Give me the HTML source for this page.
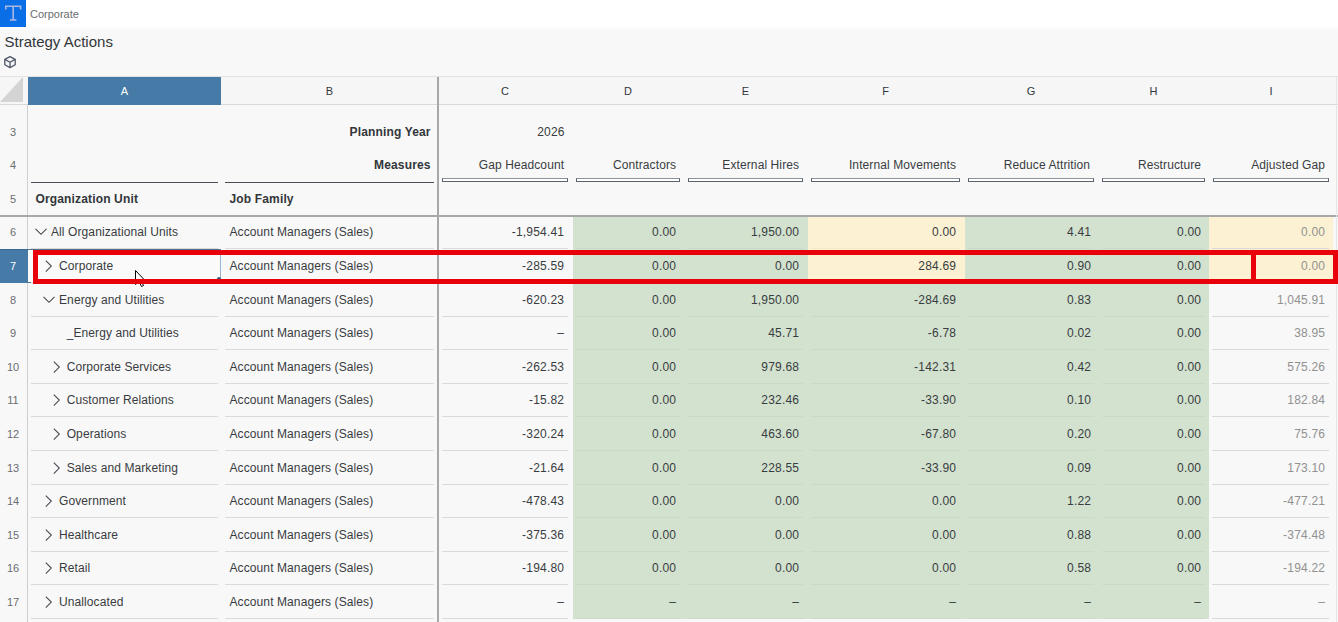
<!DOCTYPE html>
<html><head><meta charset="utf-8"><style>
html,body{margin:0;padding:0;width:1338px;height:622px;overflow:hidden;background:#f8f8f8;font-family:'Liberation Sans',sans-serif;}
.t{position:absolute;white-space:pre;}
.r{position:absolute;box-sizing:content-box;}
svg.r{display:block}
</style></head><body>
<div class="r" style="left:0px;top:0px;width:1338px;height:27px;background:#ffffff;"></div>
<div class="r" style="left:0px;top:0px;width:26px;height:27px;background:#0a6ee6;"></div>
<div class="r" style="left:0;top:27px;width:1338px;height:4px;background:linear-gradient(#fdfdfd,#f8f8f8)"></div>
<svg class="r" style="left:0;top:0" width="26" height="27"><g fill="none" stroke="#aab8e2" stroke-width="1.6"><path d="M5.8 9.5 V6.3 H20.6 V9.5"/><path d="M13.2 6.3 V20"/><path d="M10 20 H16.4"/></g></svg>
<div class="t" style="top:8.00px;font-size:11px;line-height:12px;color:#6a6d70;left:30.00px;">Corporate</div>
<div class="t" style="top:32.50px;font-size:15px;line-height:17px;color:#32363a;left:4.50px;">Strategy Actions</div>
<svg class="r" style="left:3px;top:55px" width="14" height="14" viewBox="0 0 14 14"><g fill="none" stroke="#4d5766" stroke-width="1.3" stroke-linejoin="round"><path d="M7 1.6 L12.2 4.4 V9.8 L7 12.6 L1.8 9.8 V4.4 Z"/><path d="M1.8 4.4 L7 7.2 L12.2 4.4 M7 7.2 V12.6"/></g></svg>
<div class="r" style="left:0px;top:76px;width:1338px;height:29px;background:#f6f6f6;"></div>
<div class="r" style="left:0px;top:76px;width:1338px;height:1px;background:#e3e3e3;"></div>
<div class="r" style="left:0px;top:104px;width:1338px;height:1px;background:#d9d9d9;"></div>
<svg class="r" style="left:0;top:77px" width="24" height="26"><path d="M23 0 V25 H0 Z" fill="#d4d4d4"/></svg>
<div class="r" style="left:28px;top:77px;width:193px;height:28px;background:#467ba8;"></div>
<div class="t" style="top:85.00px;font-size:11px;line-height:12px;color:#ffffff;left:24.50px;width:200px;text-align:center;">A</div>
<div class="t" style="top:85.00px;font-size:11px;line-height:12px;color:#32363a;left:229.50px;width:200px;text-align:center;">B</div>
<div class="t" style="top:85.00px;font-size:11px;line-height:12px;color:#32363a;left:405.00px;width:200px;text-align:center;">C</div>
<div class="t" style="top:85.00px;font-size:11px;line-height:12px;color:#32363a;left:528.00px;width:200px;text-align:center;">D</div>
<div class="t" style="top:85.00px;font-size:11px;line-height:12px;color:#32363a;left:645.50px;width:200px;text-align:center;">E</div>
<div class="t" style="top:85.00px;font-size:11px;line-height:12px;color:#32363a;left:785.50px;width:200px;text-align:center;">F</div>
<div class="t" style="top:85.00px;font-size:11px;line-height:12px;color:#32363a;left:931.00px;width:200px;text-align:center;">G</div>
<div class="t" style="top:85.00px;font-size:11px;line-height:12px;color:#32363a;left:1053.50px;width:200px;text-align:center;">H</div>
<div class="t" style="top:85.00px;font-size:11px;line-height:12px;color:#32363a;left:1171.00px;width:200px;text-align:center;">I</div>
<div class="r" style="left:27px;top:105px;width:1px;height:517px;background:#cfcfcf;"></div>
<div class="r" style="left:0px;top:215px;width:1338px;height:2px;background:#a8a8a8;"></div>
<div class="r" style="left:437px;top:77px;width:2px;height:545px;background:#a8a8a8;"></div>
<div class="r" style="left:0px;top:249px;width:28px;height:34px;background:#467ba8;"></div>
<div class="r" style="left:0px;top:249px;width:28px;height:1px;background:#3b6890;"></div>
<div class="t" style="top:125.50px;font-size:11px;line-height:12px;color:#6a6d70;left:-87.00px;width:200px;text-align:center;">3</div>
<div class="t" style="top:158.50px;font-size:11px;line-height:12px;color:#6a6d70;left:-87.00px;width:200px;text-align:center;">4</div>
<div class="t" style="top:192.50px;font-size:11px;line-height:12px;color:#6a6d70;left:-87.00px;width:200px;text-align:center;">5</div>
<div class="t" style="top:226.00px;font-size:11px;line-height:12px;color:#6a6d70;left:-87.00px;width:200px;text-align:center;">6</div>
<div class="t" style="top:260.00px;font-size:11px;line-height:12px;color:#ffffff;left:-87.00px;width:200px;text-align:center;">7</div>
<div class="t" style="top:294.00px;font-size:11px;line-height:12px;color:#6a6d70;left:-87.00px;width:200px;text-align:center;">8</div>
<div class="t" style="top:327.00px;font-size:11px;line-height:12px;color:#6a6d70;left:-87.00px;width:200px;text-align:center;">9</div>
<div class="t" style="top:361.00px;font-size:11px;line-height:12px;color:#6a6d70;left:-87.00px;width:200px;text-align:center;">10</div>
<div class="t" style="top:394.00px;font-size:11px;line-height:12px;color:#6a6d70;left:-87.00px;width:200px;text-align:center;">11</div>
<div class="t" style="top:428.00px;font-size:11px;line-height:12px;color:#6a6d70;left:-87.00px;width:200px;text-align:center;">12</div>
<div class="t" style="top:462.00px;font-size:11px;line-height:12px;color:#6a6d70;left:-87.00px;width:200px;text-align:center;">13</div>
<div class="t" style="top:495.00px;font-size:11px;line-height:12px;color:#6a6d70;left:-87.00px;width:200px;text-align:center;">14</div>
<div class="t" style="top:529.00px;font-size:11px;line-height:12px;color:#6a6d70;left:-87.00px;width:200px;text-align:center;">15</div>
<div class="t" style="top:562.00px;font-size:11px;line-height:12px;color:#6a6d70;left:-87.00px;width:200px;text-align:center;">16</div>
<div class="t" style="top:596.00px;font-size:11px;line-height:12px;color:#6a6d70;left:-87.00px;width:200px;text-align:center;">17</div>
<div class="t" style="top:124.70px;font-size:12px;line-height:14px;color:#32363a;font-weight:bold;letter-spacing:0.15px;right:907.35px;">Planning Year</div>
<div class="t" style="top:124.70px;font-size:12px;line-height:14px;color:#383c41;letter-spacing:0.2px;right:773.30px;">2026</div>
<div class="t" style="top:157.50px;font-size:12px;line-height:14px;color:#32363a;font-weight:bold;letter-spacing:0.15px;right:907.35px;">Measures</div>
<div class="t" style="top:157.50px;font-size:12px;line-height:14px;color:#383c41;letter-spacing:0.1px;right:773.90px;">Gap Headcount</div>
<div class="r" style="left:442px;top:178px;width:124px;height:2px;border:1px solid #5b6370;border-top-color:#8d939b;background:#fff"></div>
<div class="t" style="top:157.50px;font-size:12px;line-height:14px;color:#383c41;letter-spacing:0.1px;right:661.90px;">Contractors</div>
<div class="r" style="left:576px;top:178px;width:102px;height:2px;border:1px solid #5b6370;border-top-color:#8d939b;background:#fff"></div>
<div class="t" style="top:157.50px;font-size:12px;line-height:14px;color:#383c41;letter-spacing:0.1px;right:538.90px;">External Hires</div>
<div class="r" style="left:688px;top:178px;width:113px;height:2px;border:1px solid #5b6370;border-top-color:#8d939b;background:#fff"></div>
<div class="t" style="top:157.50px;font-size:12px;line-height:14px;color:#383c41;letter-spacing:0.1px;right:381.90px;">Internal Movements</div>
<div class="r" style="left:811px;top:178px;width:147px;height:2px;border:1px solid #5b6370;border-top-color:#8d939b;background:#fff"></div>
<div class="t" style="top:157.50px;font-size:12px;line-height:14px;color:#383c41;letter-spacing:0.1px;right:247.90px;">Reduce Attrition</div>
<div class="r" style="left:968px;top:178px;width:124px;height:2px;border:1px solid #5b6370;border-top-color:#8d939b;background:#fff"></div>
<div class="t" style="top:157.50px;font-size:12px;line-height:14px;color:#383c41;letter-spacing:0.1px;right:136.90px;">Restructure</div>
<div class="r" style="left:1102px;top:178px;width:101px;height:2px;border:1px solid #5b6370;border-top-color:#8d939b;background:#fff"></div>
<div class="t" style="top:157.50px;font-size:12px;line-height:14px;color:#383c41;letter-spacing:0.1px;right:12.90px;">Adjusted Gap</div>
<div class="r" style="left:1213px;top:178px;width:114px;height:2px;border:1px solid #5b6370;border-top-color:#8d939b;background:#fff"></div>
<div class="r" style="left:31px;top:182px;width:187px;height:1px;background:#4a4f55;"></div>
<div class="r" style="left:225px;top:182px;width:209px;height:1px;background:#4a4f55;"></div>
<div class="t" style="top:192.00px;font-size:12px;line-height:14px;color:#32363a;font-weight:bold;letter-spacing:0.15px;left:35.50px;">Organization Unit</div>
<div class="t" style="top:192.00px;font-size:12px;line-height:14px;color:#32363a;font-weight:bold;letter-spacing:0.15px;left:229.50px;">Job Family</div>
<div class="r" style="left:573px;top:217px;width:636px;height:402px;background:#d3e2cf"></div>
<div class="r" style="left:808px;top:217.0px;width:157px;height:33.6px;background:#fcf2d3"></div>
<div class="r" style="left:1209px;top:217.0px;width:124px;height:33.6px;background:#fcf2d3"></div>
<div class="r" style="left:808px;top:250.6px;width:157px;height:33.6px;background:#fcf2d3"></div>
<div class="r" style="left:1209px;top:250.6px;width:124px;height:33.6px;background:#fcf2d3"></div>
<div class="r" style="left:28px;top:249px;width:192px;height:32px;background:#fafafa;border-top:1px solid #4f6f8f;border-bottom:1px solid #4f6f8f;border-right:1px solid #9ab5d2"></div>
<div class="r" style="left:31px;top:248px;width:187px;height:1px;background:#dadada;"></div>
<div class="r" style="left:225px;top:248px;width:209px;height:1px;background:#dadada;"></div>
<div class="r" style="left:442px;top:248px;width:126px;height:1px;background:#dadada;"></div>
<div class="r" style="left:576px;top:248px;width:104px;height:1px;background:rgba(0,0,0,0.035)"></div>
<div class="r" style="left:688px;top:248px;width:115px;height:1px;background:rgba(0,0,0,0.035)"></div>
<div class="r" style="left:811px;top:248px;width:149px;height:1px;background:rgba(0,0,0,0.035)"></div>
<div class="r" style="left:968px;top:248px;width:126px;height:1px;background:rgba(0,0,0,0.035)"></div>
<div class="r" style="left:1102px;top:248px;width:103px;height:1px;background:rgba(0,0,0,0.035)"></div>
<div class="r" style="left:1212px;top:248px;width:117px;height:1px;background:#dadada;"></div>
<svg class="r" style="left:35px;top:228.40px" width="12" height="8"><path d="M0.5 0.8 L6 6.3 L11.5 0.8" fill="none" stroke="#42474d" stroke-width="1.05"/></svg>
<div class="t" style="top:225.00px;font-size:12px;line-height:14px;color:#383c41;letter-spacing:0.1px;left:51.00px;">All Organizational Units</div>
<div class="t" style="top:225.00px;font-size:12px;line-height:14px;color:#383c41;letter-spacing:0.1px;left:229.50px;">Account Managers (Sales)</div>
<div class="t" style="top:225.00px;font-size:12px;line-height:14px;color:#383c41;letter-spacing:0.2px;right:773.80px;">-1,954.41</div>
<div class="t" style="top:225.00px;font-size:12px;line-height:14px;color:#383c41;letter-spacing:0.2px;right:661.80px;">0.00</div>
<div class="t" style="top:225.00px;font-size:12px;line-height:14px;color:#383c41;letter-spacing:0.2px;right:538.80px;">1,950.00</div>
<div class="t" style="top:225.00px;font-size:12px;line-height:14px;color:#383c41;letter-spacing:0.2px;right:381.80px;">0.00</div>
<div class="t" style="top:225.00px;font-size:12px;line-height:14px;color:#383c41;letter-spacing:0.2px;right:246.80px;">4.41</div>
<div class="t" style="top:225.00px;font-size:12px;line-height:14px;color:#383c41;letter-spacing:0.2px;right:136.80px;">0.00</div>
<div class="t" style="top:225.00px;font-size:12px;line-height:14px;color:#919191;letter-spacing:0.2px;right:12.80px;">0.00</div>
<div class="r" style="left:31px;top:282px;width:187px;height:1px;background:#dadada;"></div>
<div class="r" style="left:225px;top:282px;width:209px;height:1px;background:#dadada;"></div>
<div class="r" style="left:442px;top:282px;width:126px;height:1px;background:#dadada;"></div>
<div class="r" style="left:576px;top:282px;width:104px;height:1px;background:rgba(0,0,0,0.035)"></div>
<div class="r" style="left:688px;top:282px;width:115px;height:1px;background:rgba(0,0,0,0.035)"></div>
<div class="r" style="left:811px;top:282px;width:149px;height:1px;background:rgba(0,0,0,0.035)"></div>
<div class="r" style="left:968px;top:282px;width:126px;height:1px;background:rgba(0,0,0,0.035)"></div>
<div class="r" style="left:1102px;top:282px;width:103px;height:1px;background:rgba(0,0,0,0.035)"></div>
<div class="r" style="left:1212px;top:282px;width:117px;height:1px;background:#dadada;"></div>
<svg class="r" style="left:45.2px;top:259.80px" width="8" height="13"><path d="M0.8 0.6 L6.3 6.1 L0.8 11.6" fill="none" stroke="#42474d" stroke-width="1.05"/></svg>
<div class="t" style="top:259.00px;font-size:12px;line-height:14px;color:#383c41;letter-spacing:0.1px;left:59.00px;">Corporate</div>
<div class="t" style="top:259.00px;font-size:12px;line-height:14px;color:#383c41;letter-spacing:0.1px;left:229.50px;">Account Managers (Sales)</div>
<div class="t" style="top:259.00px;font-size:12px;line-height:14px;color:#383c41;letter-spacing:0.2px;right:773.80px;">-285.59</div>
<div class="t" style="top:259.00px;font-size:12px;line-height:14px;color:#383c41;letter-spacing:0.2px;right:661.80px;">0.00</div>
<div class="t" style="top:259.00px;font-size:12px;line-height:14px;color:#383c41;letter-spacing:0.2px;right:538.80px;">0.00</div>
<div class="t" style="top:259.00px;font-size:12px;line-height:14px;color:#383c41;letter-spacing:0.2px;right:381.80px;">284.69</div>
<div class="t" style="top:259.00px;font-size:12px;line-height:14px;color:#383c41;letter-spacing:0.2px;right:246.80px;">0.90</div>
<div class="t" style="top:259.00px;font-size:12px;line-height:14px;color:#383c41;letter-spacing:0.2px;right:136.80px;">0.00</div>
<div class="t" style="top:259.00px;font-size:12px;line-height:14px;color:#919191;letter-spacing:0.2px;right:12.80px;">0.00</div>
<div class="r" style="left:31px;top:316px;width:187px;height:1px;background:#dadada;"></div>
<div class="r" style="left:225px;top:316px;width:209px;height:1px;background:#dadada;"></div>
<div class="r" style="left:442px;top:316px;width:126px;height:1px;background:#dadada;"></div>
<div class="r" style="left:576px;top:316px;width:104px;height:1px;background:rgba(0,0,0,0.035)"></div>
<div class="r" style="left:688px;top:316px;width:115px;height:1px;background:rgba(0,0,0,0.035)"></div>
<div class="r" style="left:811px;top:316px;width:149px;height:1px;background:rgba(0,0,0,0.035)"></div>
<div class="r" style="left:968px;top:316px;width:126px;height:1px;background:rgba(0,0,0,0.035)"></div>
<div class="r" style="left:1102px;top:316px;width:103px;height:1px;background:rgba(0,0,0,0.035)"></div>
<div class="r" style="left:1212px;top:316px;width:117px;height:1px;background:#dadada;"></div>
<svg class="r" style="left:43px;top:296.40px" width="12" height="8"><path d="M0.5 0.8 L6 6.3 L11.5 0.8" fill="none" stroke="#42474d" stroke-width="1.05"/></svg>
<div class="t" style="top:293.00px;font-size:12px;line-height:14px;color:#383c41;letter-spacing:0.1px;left:59.00px;">Energy and Utilities</div>
<div class="t" style="top:293.00px;font-size:12px;line-height:14px;color:#383c41;letter-spacing:0.1px;left:229.50px;">Account Managers (Sales)</div>
<div class="t" style="top:293.00px;font-size:12px;line-height:14px;color:#383c41;letter-spacing:0.2px;right:773.80px;">-620.23</div>
<div class="t" style="top:293.00px;font-size:12px;line-height:14px;color:#383c41;letter-spacing:0.2px;right:661.80px;">0.00</div>
<div class="t" style="top:293.00px;font-size:12px;line-height:14px;color:#383c41;letter-spacing:0.2px;right:538.80px;">1,950.00</div>
<div class="t" style="top:293.00px;font-size:12px;line-height:14px;color:#383c41;letter-spacing:0.2px;right:381.80px;">-284.69</div>
<div class="t" style="top:293.00px;font-size:12px;line-height:14px;color:#383c41;letter-spacing:0.2px;right:246.80px;">0.83</div>
<div class="t" style="top:293.00px;font-size:12px;line-height:14px;color:#383c41;letter-spacing:0.2px;right:136.80px;">0.00</div>
<div class="t" style="top:293.00px;font-size:12px;line-height:14px;color:#919191;letter-spacing:0.2px;right:12.80px;">1,045.91</div>
<div class="r" style="left:31px;top:349px;width:187px;height:1px;background:#dadada;"></div>
<div class="r" style="left:225px;top:349px;width:209px;height:1px;background:#dadada;"></div>
<div class="r" style="left:442px;top:349px;width:126px;height:1px;background:#dadada;"></div>
<div class="r" style="left:576px;top:349px;width:104px;height:1px;background:rgba(0,0,0,0.035)"></div>
<div class="r" style="left:688px;top:349px;width:115px;height:1px;background:rgba(0,0,0,0.035)"></div>
<div class="r" style="left:811px;top:349px;width:149px;height:1px;background:rgba(0,0,0,0.035)"></div>
<div class="r" style="left:968px;top:349px;width:126px;height:1px;background:rgba(0,0,0,0.035)"></div>
<div class="r" style="left:1102px;top:349px;width:103px;height:1px;background:rgba(0,0,0,0.035)"></div>
<div class="r" style="left:1212px;top:349px;width:117px;height:1px;background:#dadada;"></div>
<div class="t" style="top:326.00px;font-size:12px;line-height:14px;color:#383c41;letter-spacing:0.1px;left:66.70px;">_Energy and Utilities</div>
<div class="t" style="top:326.00px;font-size:12px;line-height:14px;color:#383c41;letter-spacing:0.1px;left:229.50px;">Account Managers (Sales)</div>
<div class="t" style="top:326.00px;font-size:12px;line-height:14px;color:#383c41;letter-spacing:0.2px;right:773.80px;">&ndash;</div>
<div class="t" style="top:326.00px;font-size:12px;line-height:14px;color:#383c41;letter-spacing:0.2px;right:661.80px;">0.00</div>
<div class="t" style="top:326.00px;font-size:12px;line-height:14px;color:#383c41;letter-spacing:0.2px;right:538.80px;">45.71</div>
<div class="t" style="top:326.00px;font-size:12px;line-height:14px;color:#383c41;letter-spacing:0.2px;right:381.80px;">-6.78</div>
<div class="t" style="top:326.00px;font-size:12px;line-height:14px;color:#383c41;letter-spacing:0.2px;right:246.80px;">0.02</div>
<div class="t" style="top:326.00px;font-size:12px;line-height:14px;color:#383c41;letter-spacing:0.2px;right:136.80px;">0.00</div>
<div class="t" style="top:326.00px;font-size:12px;line-height:14px;color:#919191;letter-spacing:0.2px;right:12.80px;">38.95</div>
<div class="r" style="left:31px;top:383px;width:187px;height:1px;background:#dadada;"></div>
<div class="r" style="left:225px;top:383px;width:209px;height:1px;background:#dadada;"></div>
<div class="r" style="left:442px;top:383px;width:126px;height:1px;background:#dadada;"></div>
<div class="r" style="left:576px;top:383px;width:104px;height:1px;background:rgba(0,0,0,0.035)"></div>
<div class="r" style="left:688px;top:383px;width:115px;height:1px;background:rgba(0,0,0,0.035)"></div>
<div class="r" style="left:811px;top:383px;width:149px;height:1px;background:rgba(0,0,0,0.035)"></div>
<div class="r" style="left:968px;top:383px;width:126px;height:1px;background:rgba(0,0,0,0.035)"></div>
<div class="r" style="left:1102px;top:383px;width:103px;height:1px;background:rgba(0,0,0,0.035)"></div>
<div class="r" style="left:1212px;top:383px;width:117px;height:1px;background:#dadada;"></div>
<svg class="r" style="left:52.7px;top:360.80px" width="8" height="13"><path d="M0.8 0.6 L6.3 6.1 L0.8 11.6" fill="none" stroke="#42474d" stroke-width="1.05"/></svg>
<div class="t" style="top:360.00px;font-size:12px;line-height:14px;color:#383c41;letter-spacing:0.1px;left:66.70px;">Corporate Services</div>
<div class="t" style="top:360.00px;font-size:12px;line-height:14px;color:#383c41;letter-spacing:0.1px;left:229.50px;">Account Managers (Sales)</div>
<div class="t" style="top:360.00px;font-size:12px;line-height:14px;color:#383c41;letter-spacing:0.2px;right:773.80px;">-262.53</div>
<div class="t" style="top:360.00px;font-size:12px;line-height:14px;color:#383c41;letter-spacing:0.2px;right:661.80px;">0.00</div>
<div class="t" style="top:360.00px;font-size:12px;line-height:14px;color:#383c41;letter-spacing:0.2px;right:538.80px;">979.68</div>
<div class="t" style="top:360.00px;font-size:12px;line-height:14px;color:#383c41;letter-spacing:0.2px;right:381.80px;">-142.31</div>
<div class="t" style="top:360.00px;font-size:12px;line-height:14px;color:#383c41;letter-spacing:0.2px;right:246.80px;">0.42</div>
<div class="t" style="top:360.00px;font-size:12px;line-height:14px;color:#383c41;letter-spacing:0.2px;right:136.80px;">0.00</div>
<div class="t" style="top:360.00px;font-size:12px;line-height:14px;color:#919191;letter-spacing:0.2px;right:12.80px;">575.26</div>
<div class="r" style="left:31px;top:416px;width:187px;height:1px;background:#dadada;"></div>
<div class="r" style="left:225px;top:416px;width:209px;height:1px;background:#dadada;"></div>
<div class="r" style="left:442px;top:416px;width:126px;height:1px;background:#dadada;"></div>
<div class="r" style="left:576px;top:416px;width:104px;height:1px;background:rgba(0,0,0,0.035)"></div>
<div class="r" style="left:688px;top:416px;width:115px;height:1px;background:rgba(0,0,0,0.035)"></div>
<div class="r" style="left:811px;top:416px;width:149px;height:1px;background:rgba(0,0,0,0.035)"></div>
<div class="r" style="left:968px;top:416px;width:126px;height:1px;background:rgba(0,0,0,0.035)"></div>
<div class="r" style="left:1102px;top:416px;width:103px;height:1px;background:rgba(0,0,0,0.035)"></div>
<div class="r" style="left:1212px;top:416px;width:117px;height:1px;background:#dadada;"></div>
<svg class="r" style="left:52.7px;top:393.80px" width="8" height="13"><path d="M0.8 0.6 L6.3 6.1 L0.8 11.6" fill="none" stroke="#42474d" stroke-width="1.05"/></svg>
<div class="t" style="top:393.00px;font-size:12px;line-height:14px;color:#383c41;letter-spacing:0.1px;left:66.70px;">Customer Relations</div>
<div class="t" style="top:393.00px;font-size:12px;line-height:14px;color:#383c41;letter-spacing:0.1px;left:229.50px;">Account Managers (Sales)</div>
<div class="t" style="top:393.00px;font-size:12px;line-height:14px;color:#383c41;letter-spacing:0.2px;right:773.80px;">-15.82</div>
<div class="t" style="top:393.00px;font-size:12px;line-height:14px;color:#383c41;letter-spacing:0.2px;right:661.80px;">0.00</div>
<div class="t" style="top:393.00px;font-size:12px;line-height:14px;color:#383c41;letter-spacing:0.2px;right:538.80px;">232.46</div>
<div class="t" style="top:393.00px;font-size:12px;line-height:14px;color:#383c41;letter-spacing:0.2px;right:381.80px;">-33.90</div>
<div class="t" style="top:393.00px;font-size:12px;line-height:14px;color:#383c41;letter-spacing:0.2px;right:246.80px;">0.10</div>
<div class="t" style="top:393.00px;font-size:12px;line-height:14px;color:#383c41;letter-spacing:0.2px;right:136.80px;">0.00</div>
<div class="t" style="top:393.00px;font-size:12px;line-height:14px;color:#919191;letter-spacing:0.2px;right:12.80px;">182.84</div>
<div class="r" style="left:31px;top:450px;width:187px;height:1px;background:#dadada;"></div>
<div class="r" style="left:225px;top:450px;width:209px;height:1px;background:#dadada;"></div>
<div class="r" style="left:442px;top:450px;width:126px;height:1px;background:#dadada;"></div>
<div class="r" style="left:576px;top:450px;width:104px;height:1px;background:rgba(0,0,0,0.035)"></div>
<div class="r" style="left:688px;top:450px;width:115px;height:1px;background:rgba(0,0,0,0.035)"></div>
<div class="r" style="left:811px;top:450px;width:149px;height:1px;background:rgba(0,0,0,0.035)"></div>
<div class="r" style="left:968px;top:450px;width:126px;height:1px;background:rgba(0,0,0,0.035)"></div>
<div class="r" style="left:1102px;top:450px;width:103px;height:1px;background:rgba(0,0,0,0.035)"></div>
<div class="r" style="left:1212px;top:450px;width:117px;height:1px;background:#dadada;"></div>
<svg class="r" style="left:52.7px;top:427.80px" width="8" height="13"><path d="M0.8 0.6 L6.3 6.1 L0.8 11.6" fill="none" stroke="#42474d" stroke-width="1.05"/></svg>
<div class="t" style="top:427.00px;font-size:12px;line-height:14px;color:#383c41;letter-spacing:0.1px;left:66.70px;">Operations</div>
<div class="t" style="top:427.00px;font-size:12px;line-height:14px;color:#383c41;letter-spacing:0.1px;left:229.50px;">Account Managers (Sales)</div>
<div class="t" style="top:427.00px;font-size:12px;line-height:14px;color:#383c41;letter-spacing:0.2px;right:773.80px;">-320.24</div>
<div class="t" style="top:427.00px;font-size:12px;line-height:14px;color:#383c41;letter-spacing:0.2px;right:661.80px;">0.00</div>
<div class="t" style="top:427.00px;font-size:12px;line-height:14px;color:#383c41;letter-spacing:0.2px;right:538.80px;">463.60</div>
<div class="t" style="top:427.00px;font-size:12px;line-height:14px;color:#383c41;letter-spacing:0.2px;right:381.80px;">-67.80</div>
<div class="t" style="top:427.00px;font-size:12px;line-height:14px;color:#383c41;letter-spacing:0.2px;right:246.80px;">0.20</div>
<div class="t" style="top:427.00px;font-size:12px;line-height:14px;color:#383c41;letter-spacing:0.2px;right:136.80px;">0.00</div>
<div class="t" style="top:427.00px;font-size:12px;line-height:14px;color:#919191;letter-spacing:0.2px;right:12.80px;">75.76</div>
<div class="r" style="left:31px;top:484px;width:187px;height:1px;background:#dadada;"></div>
<div class="r" style="left:225px;top:484px;width:209px;height:1px;background:#dadada;"></div>
<div class="r" style="left:442px;top:484px;width:126px;height:1px;background:#dadada;"></div>
<div class="r" style="left:576px;top:484px;width:104px;height:1px;background:rgba(0,0,0,0.035)"></div>
<div class="r" style="left:688px;top:484px;width:115px;height:1px;background:rgba(0,0,0,0.035)"></div>
<div class="r" style="left:811px;top:484px;width:149px;height:1px;background:rgba(0,0,0,0.035)"></div>
<div class="r" style="left:968px;top:484px;width:126px;height:1px;background:rgba(0,0,0,0.035)"></div>
<div class="r" style="left:1102px;top:484px;width:103px;height:1px;background:rgba(0,0,0,0.035)"></div>
<div class="r" style="left:1212px;top:484px;width:117px;height:1px;background:#dadada;"></div>
<svg class="r" style="left:52.7px;top:461.80px" width="8" height="13"><path d="M0.8 0.6 L6.3 6.1 L0.8 11.6" fill="none" stroke="#42474d" stroke-width="1.05"/></svg>
<div class="t" style="top:461.00px;font-size:12px;line-height:14px;color:#383c41;letter-spacing:0.1px;left:66.70px;">Sales and Marketing</div>
<div class="t" style="top:461.00px;font-size:12px;line-height:14px;color:#383c41;letter-spacing:0.1px;left:229.50px;">Account Managers (Sales)</div>
<div class="t" style="top:461.00px;font-size:12px;line-height:14px;color:#383c41;letter-spacing:0.2px;right:773.80px;">-21.64</div>
<div class="t" style="top:461.00px;font-size:12px;line-height:14px;color:#383c41;letter-spacing:0.2px;right:661.80px;">0.00</div>
<div class="t" style="top:461.00px;font-size:12px;line-height:14px;color:#383c41;letter-spacing:0.2px;right:538.80px;">228.55</div>
<div class="t" style="top:461.00px;font-size:12px;line-height:14px;color:#383c41;letter-spacing:0.2px;right:381.80px;">-33.90</div>
<div class="t" style="top:461.00px;font-size:12px;line-height:14px;color:#383c41;letter-spacing:0.2px;right:246.80px;">0.09</div>
<div class="t" style="top:461.00px;font-size:12px;line-height:14px;color:#383c41;letter-spacing:0.2px;right:136.80px;">0.00</div>
<div class="t" style="top:461.00px;font-size:12px;line-height:14px;color:#919191;letter-spacing:0.2px;right:12.80px;">173.10</div>
<div class="r" style="left:31px;top:517px;width:187px;height:1px;background:#dadada;"></div>
<div class="r" style="left:225px;top:517px;width:209px;height:1px;background:#dadada;"></div>
<div class="r" style="left:442px;top:517px;width:126px;height:1px;background:#dadada;"></div>
<div class="r" style="left:576px;top:517px;width:104px;height:1px;background:rgba(0,0,0,0.035)"></div>
<div class="r" style="left:688px;top:517px;width:115px;height:1px;background:rgba(0,0,0,0.035)"></div>
<div class="r" style="left:811px;top:517px;width:149px;height:1px;background:rgba(0,0,0,0.035)"></div>
<div class="r" style="left:968px;top:517px;width:126px;height:1px;background:rgba(0,0,0,0.035)"></div>
<div class="r" style="left:1102px;top:517px;width:103px;height:1px;background:rgba(0,0,0,0.035)"></div>
<div class="r" style="left:1212px;top:517px;width:117px;height:1px;background:#dadada;"></div>
<svg class="r" style="left:45.2px;top:494.80px" width="8" height="13"><path d="M0.8 0.6 L6.3 6.1 L0.8 11.6" fill="none" stroke="#42474d" stroke-width="1.05"/></svg>
<div class="t" style="top:494.00px;font-size:12px;line-height:14px;color:#383c41;letter-spacing:0.1px;left:59.00px;">Government</div>
<div class="t" style="top:494.00px;font-size:12px;line-height:14px;color:#383c41;letter-spacing:0.1px;left:229.50px;">Account Managers (Sales)</div>
<div class="t" style="top:494.00px;font-size:12px;line-height:14px;color:#383c41;letter-spacing:0.2px;right:773.80px;">-478.43</div>
<div class="t" style="top:494.00px;font-size:12px;line-height:14px;color:#383c41;letter-spacing:0.2px;right:661.80px;">0.00</div>
<div class="t" style="top:494.00px;font-size:12px;line-height:14px;color:#383c41;letter-spacing:0.2px;right:538.80px;">0.00</div>
<div class="t" style="top:494.00px;font-size:12px;line-height:14px;color:#383c41;letter-spacing:0.2px;right:381.80px;">0.00</div>
<div class="t" style="top:494.00px;font-size:12px;line-height:14px;color:#383c41;letter-spacing:0.2px;right:246.80px;">1.22</div>
<div class="t" style="top:494.00px;font-size:12px;line-height:14px;color:#383c41;letter-spacing:0.2px;right:136.80px;">0.00</div>
<div class="t" style="top:494.00px;font-size:12px;line-height:14px;color:#919191;letter-spacing:0.2px;right:12.80px;">-477.21</div>
<div class="r" style="left:31px;top:551px;width:187px;height:1px;background:#dadada;"></div>
<div class="r" style="left:225px;top:551px;width:209px;height:1px;background:#dadada;"></div>
<div class="r" style="left:442px;top:551px;width:126px;height:1px;background:#dadada;"></div>
<div class="r" style="left:576px;top:551px;width:104px;height:1px;background:rgba(0,0,0,0.035)"></div>
<div class="r" style="left:688px;top:551px;width:115px;height:1px;background:rgba(0,0,0,0.035)"></div>
<div class="r" style="left:811px;top:551px;width:149px;height:1px;background:rgba(0,0,0,0.035)"></div>
<div class="r" style="left:968px;top:551px;width:126px;height:1px;background:rgba(0,0,0,0.035)"></div>
<div class="r" style="left:1102px;top:551px;width:103px;height:1px;background:rgba(0,0,0,0.035)"></div>
<div class="r" style="left:1212px;top:551px;width:117px;height:1px;background:#dadada;"></div>
<svg class="r" style="left:45.2px;top:528.80px" width="8" height="13"><path d="M0.8 0.6 L6.3 6.1 L0.8 11.6" fill="none" stroke="#42474d" stroke-width="1.05"/></svg>
<div class="t" style="top:528.00px;font-size:12px;line-height:14px;color:#383c41;letter-spacing:0.1px;left:59.00px;">Healthcare</div>
<div class="t" style="top:528.00px;font-size:12px;line-height:14px;color:#383c41;letter-spacing:0.1px;left:229.50px;">Account Managers (Sales)</div>
<div class="t" style="top:528.00px;font-size:12px;line-height:14px;color:#383c41;letter-spacing:0.2px;right:773.80px;">-375.36</div>
<div class="t" style="top:528.00px;font-size:12px;line-height:14px;color:#383c41;letter-spacing:0.2px;right:661.80px;">0.00</div>
<div class="t" style="top:528.00px;font-size:12px;line-height:14px;color:#383c41;letter-spacing:0.2px;right:538.80px;">0.00</div>
<div class="t" style="top:528.00px;font-size:12px;line-height:14px;color:#383c41;letter-spacing:0.2px;right:381.80px;">0.00</div>
<div class="t" style="top:528.00px;font-size:12px;line-height:14px;color:#383c41;letter-spacing:0.2px;right:246.80px;">0.88</div>
<div class="t" style="top:528.00px;font-size:12px;line-height:14px;color:#383c41;letter-spacing:0.2px;right:136.80px;">0.00</div>
<div class="t" style="top:528.00px;font-size:12px;line-height:14px;color:#919191;letter-spacing:0.2px;right:12.80px;">-374.48</div>
<div class="r" style="left:31px;top:584px;width:187px;height:1px;background:#dadada;"></div>
<div class="r" style="left:225px;top:584px;width:209px;height:1px;background:#dadada;"></div>
<div class="r" style="left:442px;top:584px;width:126px;height:1px;background:#dadada;"></div>
<div class="r" style="left:576px;top:584px;width:104px;height:1px;background:rgba(0,0,0,0.035)"></div>
<div class="r" style="left:688px;top:584px;width:115px;height:1px;background:rgba(0,0,0,0.035)"></div>
<div class="r" style="left:811px;top:584px;width:149px;height:1px;background:rgba(0,0,0,0.035)"></div>
<div class="r" style="left:968px;top:584px;width:126px;height:1px;background:rgba(0,0,0,0.035)"></div>
<div class="r" style="left:1102px;top:584px;width:103px;height:1px;background:rgba(0,0,0,0.035)"></div>
<div class="r" style="left:1212px;top:584px;width:117px;height:1px;background:#dadada;"></div>
<svg class="r" style="left:45.2px;top:561.80px" width="8" height="13"><path d="M0.8 0.6 L6.3 6.1 L0.8 11.6" fill="none" stroke="#42474d" stroke-width="1.05"/></svg>
<div class="t" style="top:561.00px;font-size:12px;line-height:14px;color:#383c41;letter-spacing:0.1px;left:59.00px;">Retail</div>
<div class="t" style="top:561.00px;font-size:12px;line-height:14px;color:#383c41;letter-spacing:0.1px;left:229.50px;">Account Managers (Sales)</div>
<div class="t" style="top:561.00px;font-size:12px;line-height:14px;color:#383c41;letter-spacing:0.2px;right:773.80px;">-194.80</div>
<div class="t" style="top:561.00px;font-size:12px;line-height:14px;color:#383c41;letter-spacing:0.2px;right:661.80px;">0.00</div>
<div class="t" style="top:561.00px;font-size:12px;line-height:14px;color:#383c41;letter-spacing:0.2px;right:538.80px;">0.00</div>
<div class="t" style="top:561.00px;font-size:12px;line-height:14px;color:#383c41;letter-spacing:0.2px;right:381.80px;">0.00</div>
<div class="t" style="top:561.00px;font-size:12px;line-height:14px;color:#383c41;letter-spacing:0.2px;right:246.80px;">0.58</div>
<div class="t" style="top:561.00px;font-size:12px;line-height:14px;color:#383c41;letter-spacing:0.2px;right:136.80px;">0.00</div>
<div class="t" style="top:561.00px;font-size:12px;line-height:14px;color:#919191;letter-spacing:0.2px;right:12.80px;">-194.22</div>
<div class="r" style="left:31px;top:618px;width:187px;height:1px;background:#dadada;"></div>
<div class="r" style="left:225px;top:618px;width:209px;height:1px;background:#dadada;"></div>
<div class="r" style="left:442px;top:618px;width:126px;height:1px;background:#dadada;"></div>
<div class="r" style="left:576px;top:618px;width:104px;height:1px;background:rgba(0,0,0,0.035)"></div>
<div class="r" style="left:688px;top:618px;width:115px;height:1px;background:rgba(0,0,0,0.035)"></div>
<div class="r" style="left:811px;top:618px;width:149px;height:1px;background:rgba(0,0,0,0.035)"></div>
<div class="r" style="left:968px;top:618px;width:126px;height:1px;background:rgba(0,0,0,0.035)"></div>
<div class="r" style="left:1102px;top:618px;width:103px;height:1px;background:rgba(0,0,0,0.035)"></div>
<div class="r" style="left:1212px;top:618px;width:117px;height:1px;background:#dadada;"></div>
<svg class="r" style="left:45.2px;top:595.80px" width="8" height="13"><path d="M0.8 0.6 L6.3 6.1 L0.8 11.6" fill="none" stroke="#42474d" stroke-width="1.05"/></svg>
<div class="t" style="top:595.00px;font-size:12px;line-height:14px;color:#383c41;letter-spacing:0.1px;left:59.00px;">Unallocated</div>
<div class="t" style="top:595.00px;font-size:12px;line-height:14px;color:#383c41;letter-spacing:0.1px;left:229.50px;">Account Managers (Sales)</div>
<div class="t" style="top:595.00px;font-size:12px;line-height:14px;color:#383c41;letter-spacing:0.2px;right:773.80px;">&ndash;</div>
<div class="t" style="top:595.00px;font-size:12px;line-height:14px;color:#383c41;letter-spacing:0.2px;right:661.80px;">&ndash;</div>
<div class="t" style="top:595.00px;font-size:12px;line-height:14px;color:#383c41;letter-spacing:0.2px;right:538.80px;">&ndash;</div>
<div class="t" style="top:595.00px;font-size:12px;line-height:14px;color:#383c41;letter-spacing:0.2px;right:381.80px;">&ndash;</div>
<div class="t" style="top:595.00px;font-size:12px;line-height:14px;color:#383c41;letter-spacing:0.2px;right:246.80px;">&ndash;</div>
<div class="t" style="top:595.00px;font-size:12px;line-height:14px;color:#383c41;letter-spacing:0.2px;right:136.80px;">&ndash;</div>
<div class="t" style="top:595.00px;font-size:12px;line-height:14px;color:#919191;letter-spacing:0.2px;right:12.80px;">&ndash;</div>
<div class="r" style="left:217px;top:276.5px;width:4px;height:2.5px;border-radius:2px 2px 0 0;background:#2f5f85"></div>
<div class="r" style="left:1336px;top:77px;width:1px;height:545px;background:#e6e6e6;"></div>
<svg class="r" style="left:134px;top:269px" width="12" height="19"><path d="M1.5 1.5 V15.5 L5 12.5 L7.5 17.5 L9.5 16.5 L7 11.5 H11 Z" fill="#fff" stroke="#000" stroke-width="1"/></svg>
<div class="r" style="left:33px;top:250px;width:1295px;height:24px;border:5px solid #e8000b;border-right-width:5px"></div>
<div class="r" style="left:1251px;top:250px;width:5px;height:34px;background:#e8000b"></div>
</body></html>
